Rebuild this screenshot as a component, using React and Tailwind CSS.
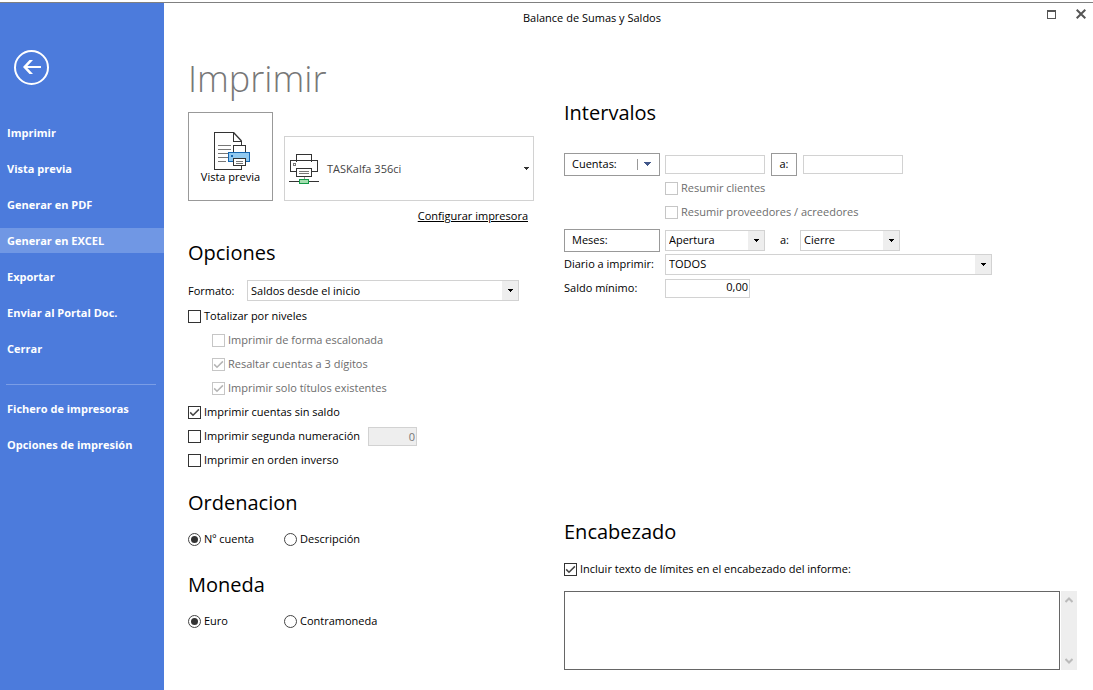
import { useState } from 'react';

const mainMenu = [
  'Imprimir',
  'Vista previa',
  'Generar en PDF',
  'Generar en EXCEL',
  'Exportar',
  'Enviar al Portal Doc.',
  'Cerrar',
];
const setupMenu = ['Fichero de impresoras', 'Opciones de impresión'];

function MenuItem({ label, active, onClick }) {
  return (
    <button
      type="button"
      onClick={onClick}
      className={`block w-full h-[25px] pl-[7px] text-left text-[11px] font-bold text-white whitespace-nowrap ${active ? 'bg-[#7097e4]' : ''}`}
    >
      {label}
    </button>
  );
}

function Heading({ children }) {
  return <h2 className="text-[20px] leading-8 text-black">{children}</h2>;
}

function Check({ label, defaultChecked, disabled }) {
  return (
    <label className={`flex items-center h-6 gap-[3px] whitespace-nowrap ${disabled ? 'text-[#6d6d6d]' : ''}`}>
      <span className="relative block size-[13px] shrink-0">
        <input
          type="checkbox"
          defaultChecked={defaultChecked}
          disabled={disabled}
          className="peer block appearance-none size-[13px] border border-[#333] bg-white disabled:border-[#c6c6c6]"
        />
        <svg
          viewBox="0 0 13 13"
          className="absolute inset-0 hidden size-[13px] pointer-events-none text-[#444] peer-checked:block peer-disabled:text-[#b4b4b4]"
          fill="none"
          stroke="currentColor"
          strokeWidth="1.5"
        >
          <path d="M2.2 6.4 L5 9.2 L10.9 3.4" />
        </svg>
      </span>
      {label}
    </label>
  );
}

function Radio({ label, name, defaultChecked }) {
  return (
    <label className="flex items-center h-6 gap-[3px] w-24 whitespace-nowrap">
      <span className="relative block size-[13px] shrink-0">
        <input
          type="radio"
          name={name}
          defaultChecked={defaultChecked}
          className="peer block appearance-none size-[13px] rounded-full border border-[#444] bg-white"
        />
        <span className="absolute inset-[3px] hidden rounded-full bg-[#333] pointer-events-none peer-checked:block"></span>
      </span>
      {label}
    </label>
  );
}

function Arrow({ className }) {
  return (
    <svg viewBox="0 0 5 3" className={`w-[5px] h-[3px] ${className}`} fill="currentColor" shapeRendering="crispEdges">
      <path d="M0 0h5v1h-1v1h-1v1h-1v-1h-1v-1h-1z" />
    </svg>
  );
}

function Select({ id, label, options, className }) {
  return (
    <span className={`relative block h-[21px] ${className}`}>
      <select
        id={id}
        aria-label={label}
        className="block appearance-none w-full h-[21px] pl-[3px] border border-[#d2d2d2] bg-white text-[11px] leading-4 text-black"
      >
        {options.map((o) => (
          <option key={o}>{o}</option>
        ))}
      </select>
      <span className="absolute right-px inset-y-px w-4 flex items-center justify-center bg-[#eee] pointer-events-none">
        <Arrow className="text-black" />
      </span>
    </span>
  );
}

function PreviewIcon() {
  return (
    <svg viewBox="-1 0 38 40" className="w-[38px] h-10" fill="none" shapeRendering="crispEdges">
      <path d="M1.5 1.5H20.5L28.5 9.5V38.5H1.5Z" fill="#fff" />
      <path d="M28.5 35V38.5H1.5V1.5H20.5" stroke="#333" />
      <path d="M20.5 1.5V10.5H28.5V14" stroke="#333" />
      <path d="M20.5 1.5L28.5 10" stroke="#333" strokeWidth="1.3" shapeRendering="auto" />
      <path d="M5 14.5H18M5 18.5H18M5 22.5H15M5 26.5H15M5 30.5H13" stroke="#777" />
      <path d="M20.5 21.5V14.5H32.5V21.5" fill="#fff" stroke="#333" />
      <path d="M15.5 21.5H36.5V30.5H15.5Z" fill="#91c9f0" stroke="#1565b0" />
      <path d="M18 24h2v2h-2z" fill="#1565b0" />
      <path d="M20.5 27.5H32.5V34.5H20.5Z" fill="#fff" stroke="#333" />
      <path d="M23 30.5H30M23 32.5H30" stroke="#777" />
    </svg>
  );
}

function PrinterIcon() {
  return (
    <svg viewBox="0 0 30 32" className="w-[30px] h-8" fill="none" shapeRendering="crispEdges">
      <path d="M7.5 8.5V1.5H22.5V8.5" stroke="#333" />
      <path d="M7.5 18.5H1.5V7.5H28.5V18.5H22.5" stroke="#333" />
      <path d="M4.5 10.5h2v2h-2z" stroke="#777" />
      <path d="M7.5 15.5H22.5V23.5H7.5Z" fill="#fff" stroke="#333" />
      <path d="M10 18.5H20M10 20.5H20" stroke="#777" />
      <path d="M15.5 24V27" stroke="#999" />
      <path d="M0 28.5H30" stroke="#333" />
      <path d="M10.5 26.5H19.5V30.5H10.5Z" fill="#a5dfb0" stroke="#159a48" />
    </svg>
  );
}

export default function App() {
  const [active, setActive] = useState('Generar en EXCEL');

  return (
    <div className="min-h-screen pt-[2px] flex flex-col bg-white text-black text-[11px] leading-4 font-['Open_Sans',sans-serif]">
      <div className="flex flex-1 border-t border-[#808080]">
        {/* Sidebar */}
        <nav className="w-[164px] shrink-0 bg-[#4c7bdc]">
          <button type="button" aria-label="Volver" className="block mt-[47px] ml-[14px] mb-[35px]">
            <svg viewBox="0 0 35 35" className="block size-[35px]" fill="none" stroke="#fff">
              <circle cx="17.5" cy="17.5" r="16.5" strokeWidth="2" />
              <path d="M27 17H11" strokeWidth="2" />
              <path d="M9 17L15.5 10H19L12.5 17L19 24H15.5Z" fill="#fff" stroke="none" />
            </svg>
          </button>
          <div className="flex flex-col gap-[11px]">
            {mainMenu.map((m) => (
              <MenuItem key={m} label={m} active={m === active} onClick={() => setActive(m)} />
            ))}
          </div>
          <hr className="mt-[23px] mb-[11px] ml-[6px] mr-2 border-[#7a9de6]" />
          <div className="flex flex-col gap-[11px]">
            {setupMenu.map((m) => (
              <MenuItem key={m} label={m} active={m === active} onClick={() => setActive(m)} />
            ))}
          </div>
        </nav>

        <div className="flex-1 flex flex-col min-w-0">
          {/* Title bar */}
          <header className="flex h-[30px]">
            <h1 className="flex-1 text-center text-[11px] leading-[30px]">Balance de Sumas y Saldos</h1>
            <div className="flex gap-5 pt-[6px] pr-[7px] w-[73px] justify-end items-start text-[#555]">
              <button type="button" aria-label="Maximizar">
                <svg viewBox="0 0 9 10" className="block w-[9px] h-[10px]" fill="none" stroke="currentColor" shapeRendering="crispEdges">
                  <path d="M0.5 1.5H8.5V9.5H0.5Z" />
                  <path d="M0 2H9" strokeWidth="2" />
                </svg>
              </button>
              <button type="button" aria-label="Cerrar ventana">
                <svg viewBox="0 0 10 10" className="block size-[10px]" fill="none" stroke="currentColor" strokeWidth="2">
                  <path d="M0.7 0.7L9.3 9.3M9.3 0.7L0.7 9.3" />
                </svg>
              </button>
            </div>
          </header>

          <main className="flex flex-1 pl-6 pr-4">
            {/* Left column */}
            <section className="w-[376px] shrink-0 pt-[22px]">
              <h2 className="text-[36px] leading-[48px] font-[350] text-[#777]">Imprimir</h2>
              <div className="flex items-end gap-[11px] mt-[9px]">
                <button type="button" className="flex flex-col items-center w-[85px] h-[89px] pt-[18px] border border-[#999]">
                  <PreviewIcon />
                  <span className="-mt-[2px]">Vista previa</span>
                </button>
                <button type="button" className="flex items-center w-[250px] h-[65px] pl-1 pr-1 border border-[#d2d2d2] text-[#444]">
                  <PrinterIcon />
                  <span className="flex-1 pl-2 text-left">TASKalfa 356ci</span>
                  <Arrow className="text-[#333]" />
                </button>
              </div>
              <div className="w-[340px] mt-[7px] text-right">
                <a href="#" className="underline">Configurar impresora</a>
              </div>

              <div className="mt-[13px]">
                <Heading>Opciones</Heading>
              </div>
              <div className="flex items-center mt-[11px]">
                <label htmlFor="formato" className="w-[59px]">Formato:</label>
                <Select id="formato" options={['Saldos desde el inicio']} className="w-[272px]" />
              </div>
              <div className="mt-[3px]">
                <Check label="Totalizar por niveles" />
                <div className="pl-6">
                  <Check label="Imprimir de forma escalonada" disabled />
                  <Check label="Resaltar cuentas a 3 dígitos" defaultChecked disabled />
                  <Check label="Imprimir solo títulos existentes" defaultChecked disabled />
                </div>
                <Check label="Imprimir cuentas sin saldo" defaultChecked />
                <div className="flex items-center">
                  <div className="w-[180px]">
                    <Check label="Imprimir segunda numeración" />
                  </div>
                  <input
                    aria-label="Segunda numeración"
                    defaultValue="0"
                    disabled
                    className="w-[49px] h-[19px] px-px border border-[#d2d2d2] bg-[#eee] text-right text-[#777]"
                  />
                </div>
                <Check label="Imprimir en orden inverso" />
              </div>

              <div className="mt-[15px]">
                <Heading>Ordenacion</Heading>
              </div>
              <div className="flex mt-2">
                <Radio name="orden" label="Nº cuenta" defaultChecked />
                <Radio name="orden" label="Descripción" />
              </div>

              <div className="mt-[18px]">
                <Heading>Moneda</Heading>
              </div>
              <div className="flex mt-2">
                <Radio name="moneda" label="Euro" defaultChecked />
                <Radio name="moneda" label="Contramoneda" />
              </div>
            </section>

            {/* Right column */}
            <section className="flex-1 min-w-0 pt-16">
              <Heading>Intervalos</Heading>
              <div className="flex items-center h-6 mt-[23px]">
                <button type="button" className="flex items-center w-24 h-[23px] pl-[7px] pr-2 mr-[5px] border border-[#999]">
                  <span className="flex-1 text-left">Cuentas:</span>
                  <span className="h-[11px] mr-[6px] border-l border-[#999]"></span>
                  <svg viewBox="0 0 7 4" className="w-[7px] h-1" fill="#41578a" shapeRendering="crispEdges">
                    <path d="M0 0h7v1h-1v1h-1v1h-1v1h-1v-1h-1v-1h-1v-1h-1z" />
                  </svg>
                </button>
                <input aria-label="Cuenta desde" className="w-[100px] h-[19px] px-[3px] border border-[#d2d2d2]" />
                <button type="button" className="w-[26px] h-[23px] mx-[6px] border border-[#999]">a:</button>
                <input aria-label="Cuenta hasta" className="w-[100px] h-[19px] px-[3px] border border-[#d2d2d2]" />
              </div>
              <div className="pl-[101px]">
                <Check label="Resumir clientes" disabled />
                <Check label="Resumir proveedores / acreedores" disabled />
              </div>
              <div className="flex items-center h-6 mt-1">
                <button type="button" className="w-24 h-[23px] pl-[7px] mr-[5px] border border-[#999] text-left">Meses:</button>
                <Select label="Mes desde" options={['Apertura']} className="w-[100px]" />
                <span className="w-[35px] pl-[15px]">a:</span>
                <Select label="Mes hasta" options={['Cierre']} className="w-[100px]" />
              </div>
              <div className="flex items-center h-6">
                <label htmlFor="diario" className="w-[101px]">Diario a imprimir:</label>
                <Select id="diario" options={['TODOS']} className="w-[327px]" />
              </div>
              <div className="flex items-center h-6">
                <label htmlFor="saldo" className="w-[101px]">Saldo mínimo:</label>
                <input id="saldo" defaultValue="0,00" className="w-[85px] h-[19px] px-px pb-1 border border-[#d2d2d2] text-right" />
              </div>

              <div className="mt-[216px]">
                <Heading>Encabezado</Heading>
              </div>
              <div className="mt-[9px]">
                <Check label="Incluir texto de límites en el encabezado del informe:" defaultChecked />
              </div>
              <div className="flex gap-px h-[79px] mt-[10px]">
                <textarea aria-label="Texto del encabezado" className="flex-1 p-1 border border-[#666] resize-none"></textarea>
                <div className="flex flex-col items-center justify-between w-4 py-[6px] bg-[#eee] text-[#bbb]">
                  <svg viewBox="0 0 8 6" className="w-2 h-[6px]" fill="none" stroke="currentColor" strokeWidth="2">
                    <path d="M0.5 5L4 1.5L7.5 5" />
                  </svg>
                  <svg viewBox="0 0 8 6" className="w-2 h-[6px]" fill="none" stroke="currentColor" strokeWidth="2">
                    <path d="M0.5 1L4 4.5L7.5 1" />
                  </svg>
                </div>
              </div>
            </section>
          </main>
        </div>
      </div>
    </div>
  );
}
